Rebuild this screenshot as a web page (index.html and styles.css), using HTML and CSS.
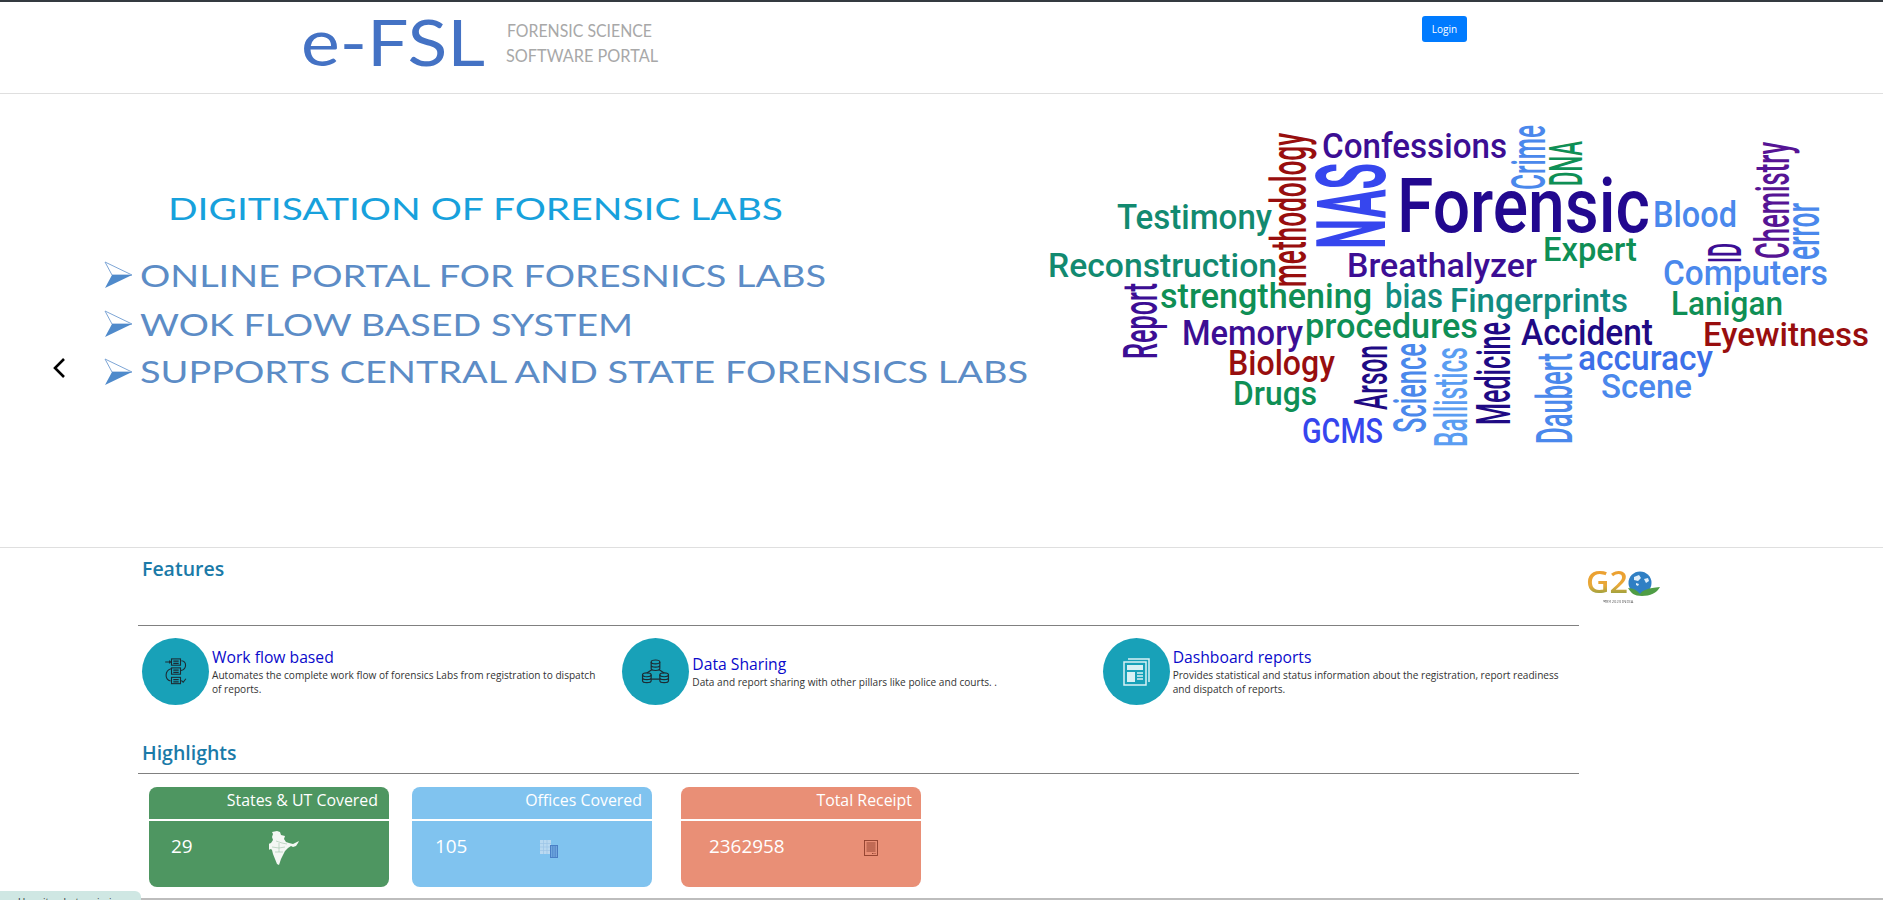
FILE: index.html
```html
<!DOCTYPE html>
<html lang="en">
<head>
<meta charset="utf-8">
<title>e-FSL Forensic Science Software Portal</title>
<link rel="stylesheet" href="styles.css">
</head>
<body>
<header class="site-header">
  <a class="logo" href="#" aria-label="e-FSL">
    <svg class="logo-svg" viewBox="298 2 365 91" width="365" height="91">
      <text class="logo-main" x="301" y="66" font-size="64" textLength="184" lengthAdjust="spacingAndGlyphs">e-FSL</text>
      <text class="logo-sub" x="507" y="37" font-size="17" textLength="145" lengthAdjust="spacingAndGlyphs">FORENSIC SCIENCE</text>
      <text class="logo-sub" x="506" y="62" font-size="17" textLength="152" lengthAdjust="spacingAndGlyphs">SOFTWARE PORTAL</text>
    </svg>
  </a>
  <button class="login" type="button">Login</button>
</header>

<section class="hero">
  <svg class="hero-art" viewBox="0 94 1883 454" width="1883" height="454">
    <text class="slide-title" x="168" y="220" font-size="31" textLength="615" lengthAdjust="spacingAndGlyphs">DIGITISATION OF FORENSIC LABS</text>

    <g class="bullet" transform="translate(105,262)"><path class="bullet-top" d="M0 0L27 13L7 13Z"/><path class="bullet-low" d="M0 26L27 13L7 13Z"/></g>
    <text class="slide-line" x="140" y="287" font-size="31" textLength="686" lengthAdjust="spacingAndGlyphs">ONLINE PORTAL FOR FORESNICS LABS</text>
    <g class="bullet" transform="translate(105,311)"><path class="bullet-top" d="M0 0L27 13L7 13Z"/><path class="bullet-low" d="M0 26L27 13L7 13Z"/></g>
    <text class="slide-line" x="140" y="336" font-size="31" textLength="493" lengthAdjust="spacingAndGlyphs">WOK FLOW BASED SYSTEM</text>
    <g class="bullet" transform="translate(105,359)"><path class="bullet-top" d="M0 0L27 13L7 13Z"/><path class="bullet-low" d="M0 26L27 13L7 13Z"/></g>
    <text class="slide-line" x="140" y="383" font-size="31" textLength="888" lengthAdjust="spacingAndGlyphs">SUPPORTS CENTRAL AND STATE FORENSICS LABS</text>

    <g class="cloud">
      <text class="w-violet" x="1322" y="158" font-size="35" textLength="185" lengthAdjust="spacingAndGlyphs">Confessions</text>
      <text class="w-indigo" x="1397" y="232" font-size="76" textLength="253" lengthAdjust="spacingAndGlyphs">Forensic</text>
      <text class="w-teal" x="1117" y="229" font-size="35" textLength="155" lengthAdjust="spacingAndGlyphs">Testimony</text>
      <text class="w-teal" x="1048" y="277" font-size="34" textLength="229" lengthAdjust="spacingAndGlyphs">Reconstruction</text>
      <text class="w-violet" x="1347" y="277" font-size="34" textLength="190" lengthAdjust="spacingAndGlyphs">Breathalyzer</text>
      <text class="w-green" x="1160" y="308" font-size="35" textLength="212" lengthAdjust="spacingAndGlyphs">strengthening</text>
      <text class="w-teal2" x="1385" y="308" font-size="35" textLength="58" lengthAdjust="spacingAndGlyphs">bias</text>
      <text class="w-teal2" x="1450" y="312" font-size="33" textLength="178" lengthAdjust="spacingAndGlyphs">Fingerprints</text>
      <text class="w-violet" x="1182" y="345" font-size="35" textLength="121" lengthAdjust="spacingAndGlyphs">Memory</text>
      <text class="w-green" x="1305" y="338" font-size="35" textLength="173" lengthAdjust="spacingAndGlyphs">procedures</text>
      <text class="w-red" x="1228" y="375" font-size="35" textLength="107" lengthAdjust="spacingAndGlyphs">Biology</text>
      <text class="w-green" x="1233" y="405" font-size="34" textLength="84" lengthAdjust="spacingAndGlyphs">Drugs</text>
      <text class="w-royal" x="1302" y="443" font-size="35" textLength="81" lengthAdjust="spacingAndGlyphs">GCMS</text>
      <text class="w-navy" x="1521" y="345" font-size="37" textLength="132" lengthAdjust="spacingAndGlyphs">Accident</text>
      <text class="w-blue2" x="1578" y="370" font-size="35" textLength="135" lengthAdjust="spacingAndGlyphs">accuracy</text>
      <text class="w-sky" x="1601" y="398" font-size="33" textLength="91" lengthAdjust="spacingAndGlyphs">Scene</text>
      <text class="w-red" x="1703" y="346" font-size="34" textLength="166" lengthAdjust="spacingAndGlyphs">Eyewitness</text>
      <text class="w-green" x="1671" y="315" font-size="34" textLength="112" lengthAdjust="spacingAndGlyphs">Lanigan</text>
      <text class="w-sky" x="1663" y="285" font-size="35" textLength="165" lengthAdjust="spacingAndGlyphs">Computers</text>
      <text class="w-green" x="1543" y="261" font-size="33" textLength="94" lengthAdjust="spacingAndGlyphs">Expert</text>
      <text class="w-sky" x="1653" y="227" font-size="36" textLength="84" lengthAdjust="spacingAndGlyphs">Blood</text>

      <text class="w-red" transform="translate(1306,287) rotate(-90)" font-size="50" textLength="154" lengthAdjust="spacingAndGlyphs">methodology</text>
      <text class="w-royal w-heavy" transform="translate(1385,249) rotate(-90)" font-size="96" textLength="86" lengthAdjust="spacingAndGlyphs">NAS</text>
      <text class="w-violet" transform="translate(1157,359) rotate(-90)" font-size="48" textLength="76" lengthAdjust="spacingAndGlyphs">Report</text>
      <text class="w-navy" transform="translate(1387,410) rotate(-90)" font-size="47" textLength="65" lengthAdjust="spacingAndGlyphs">Arson</text>
      <text class="w-sky" transform="translate(1426,433) rotate(-90)" font-size="47" textLength="90" lengthAdjust="spacingAndGlyphs">Science</text>
      <text class="w-sky2" transform="translate(1467,447) rotate(-90)" font-size="47" textLength="100" lengthAdjust="spacingAndGlyphs">Ballistics</text>
      <text class="w-navy" transform="translate(1510,425) rotate(-90)" font-size="48" textLength="103" lengthAdjust="spacingAndGlyphs">Medicine</text>
      <text class="w-sky" transform="translate(1572,444) rotate(-90)" font-size="50" textLength="91" lengthAdjust="spacingAndGlyphs">Daubert</text>
      <text class="w-sky" transform="translate(1545,190) rotate(-90)" font-size="49" textLength="65" lengthAdjust="spacingAndGlyphs">Crime</text>
      <text class="w-green" transform="translate(1582,186) rotate(-90)" font-size="47" textLength="45" lengthAdjust="spacingAndGlyphs">DNA</text>
      <text class="w-violet" transform="translate(1741,263) rotate(-90)" font-size="46" textLength="20" lengthAdjust="spacingAndGlyphs">ID</text>
      <text class="w-purple" transform="translate(1789,259) rotate(-90)" font-size="49" textLength="117" lengthAdjust="spacingAndGlyphs">Chemistry</text>
      <text class="w-sky" transform="translate(1819,260) rotate(-90)" font-size="48" textLength="57" lengthAdjust="spacingAndGlyphs">error</text>
    </g>
  </svg>
  <button class="prev" type="button" aria-label="Previous">
    <svg viewBox="0 0 14 22" width="14" height="22"><path class="prev-mark" d="M12 2L3 11L12 20"/></svg>
  </button>
</section>

<div class="content-row">
  <main class="content">
    <h2 class="section-title">Features</h2>
    <div class="section-rule features-rule"></div>
    <div class="features">
      <article class="feature">
        <div class="feature-icon">
          <svg viewBox="0 0 24 30" width="22" height="27">
            <g class="ico-dark">
              <rect x="7" y="1" width="10" height="7"/><rect x="7" y="11" width="10" height="7"/><rect x="7" y="21.500" width="10" height="7"/>
              <path d="M9 3.500h6M9 6h6M9 13.500h6M9 16h6M9 24h6M9 26.500h6"/>
              <path d="M0 4.500h6M4.500 3L6 4.500 4.500 6"/>
              <path d="M18 3c6 .5 6.500 9-.5 11"/>
              <path d="M6.500 12C-.5 14 -1 24 6 25.500"/>
              <path d="M18 25l2 2 3-4"/>
            </g>
          </svg>
        </div>
        <div class="feature-text">
          <h3 class="feature-title">Work flow based</h3>
          <p class="feature-desc">Automates the complete work flow of forensics Labs from registration to dispatch of reports.</p>
        </div>
      </article>
      <article class="feature">
        <div class="feature-icon">
          <svg viewBox="0 0 30 26" width="29" height="25">
            <g class="ico-dark">
              <ellipse cx="15" cy="3" rx="4.500" ry="2"/><path d="M10.500 3v7c0 1.200 2 2 4.500 2s4.500-.8 4.500-2V3M10.500 6.500c0 1.200 2 2 4.500 2s4.500-.8 4.500-2"/>
              <ellipse cx="6" cy="16.500" rx="4.500" ry="2"/><path d="M1.500 16.500v6c0 1.200 2 2 4.500 2s4.500-.8 4.500-2v-6M1.500 19.500c0 1.200 2 2 4.500 2s4.500-.8 4.500-2"/>
              <ellipse cx="24" cy="16.500" rx="4.500" ry="2"/><path d="M19.500 16.500v6c0 1.200 2 2 4.500 2s4.500-.8 4.500-2v-6M19.500 19.500c0 1.200 2 2 4.500 2s4.500-.8 4.500-2"/>
              <path d="M11.500 11L6 14.500M18.500 11L24 14.500M10.500 21h9"/>
            </g>
          </svg>
        </div>
        <div class="feature-text">
          <h3 class="feature-title">Data Sharing</h3>
          <p class="feature-desc">Data and report sharing with other pillars like police and courts. .</p>
        </div>
      </article>
      <article class="feature">
        <div class="feature-icon">
          <svg viewBox="0 0 28 28" width="28" height="28">
            <path class="ico-pale" d="M6 1h21v23M2 4h22v23H2Z"/>
            <rect class="ico-pale-fill" x="5" y="7" width="16" height="5"/>
            <rect class="ico-pale-fill" x="5" y="14" width="8" height="10"/>
            <path class="ico-pale" d="M15 15h6M15 18h6M15 21h6"/>
          </svg>
        </div>
        <div class="feature-text">
          <h3 class="feature-title">Dashboard reports</h3>
          <p class="feature-desc">Provides statistical and status information about the registration, report readiness and dispatch of reports.</p>
        </div>
      </article>
    </div>

    <h2 class="section-title highlights-title">Highlights</h2>
    <div class="section-rule highlights-rule"></div>
    <div class="stats">
      <article class="stat stat-states">
        <div class="stat-head">States &amp; UT Covered</div>
        <div class="stat-body">
          <span class="stat-num">29</span>
          <svg class="stat-ico" viewBox="0 0 31 34" width="31" height="34">
            <path class="map-fill" d="M8 0l3 1 1 3 4 1-1 3 2 3 3 1 4 1 2-1 4-2-1 2-2 3-3 1-2-1-3 2-3 3-2 4-2 4-2 6-2-1-2-5-2-5-1-4-1-1-3 1-1-2 2-2-1-2 3-1 2-3-1-3 1-3-1-2z"/>
            <path class="map-lines" d="M7 10l6 2 5 1M3 16l7 1 6-1M6 21h8M10 12v9"/>
          </svg>
        </div>
      </article>
      <article class="stat stat-offices">
        <div class="stat-head">Offices Covered</div>
        <div class="stat-body">
          <span class="stat-num">105</span>
          <svg class="stat-ico" viewBox="0 0 18 18" width="18" height="18">
            <rect class="bld-back" x="0" y="0" width="11" height="14"/>
            <path class="bld-lines" d="M0 3.500h11M0 7h11M0 10.500h11M3.500 0v14M7 0v14"/>
            <rect class="bld-front" x="10.500" y="5.500" width="7" height="12"/>
            <path class="bld-front-lines" d="M12.800 6v11M15.200 6v11"/>
          </svg>
        </div>
      </article>
      <article class="stat stat-receipt">
        <div class="stat-head">Total Receipt</div>
        <div class="stat-body">
          <span class="stat-num">2362958</span>
          <svg class="stat-ico" viewBox="0 0 14 16" width="14" height="16">
            <rect class="rcpt" x=".5" y=".5" width="13" height="15"/>
            <path class="rcpt" d="M2.500 3h9M2.500 5h9M2.500 7h9M2.500 9h9M2.500 11h9M8 13.500h1.500M10.500 13.500h1"/>
          </svg>
        </div>
      </article>
    </div>
  </main>
  <aside class="g20">
    <svg viewBox="0 0 74 38" width="74" height="38">
      <defs>
        <linearGradient id="g20-grad" x1="0" y1="0" x2="0" y2="1">
          <stop offset="0" stop-color="#ef9a2a"/><stop offset=".6" stop-color="#e8a838"/><stop offset="1" stop-color="#4f9d45"/>
        </linearGradient>
      </defs>
      <text class="g20-text" x="0" y="22" font-size="30" textLength="42" lengthAdjust="spacingAndGlyphs">G2</text>
      <circle class="g20-globe" cx="54" cy="12" r="11.500"/>
      <path class="g20-land" d="M48 6l5-2 2 3-3 3-4-1zM58 8l4-1 1 3-3 2zM50 12l3 1-1 2-2-1z"/>
      <path class="g20-lotus" d="M42 17c5 0 9 2 12 6c3-4 8-6 20-7c-3 6-10 9-18 9s-11-3-14-8z"/>
      <text class="g20-small" x="17" y="32" font-size="4">भारत 2023 INDIA</text>
    </svg>
  </aside>
</div>

<div class="page-edge"></div>
<div class="notice">Use site photo mission</div>
</body>
</html>
```

FILE: styles.css
```css
* { box-sizing: border-box; }

html, body {
  margin: 0;
  height: 900px;
  overflow: hidden;
  background: #fff;
  font-family: "Open Sans", "Noto Sans", sans-serif;
  color: #333;
}

body {
  position: relative;
  border-top: 2px solid #343a40;
}

/* Header */
.site-header {
  display: flex;
  align-items: flex-start;
  height: 92px;
  border-bottom: 1px solid #dfdfdf;
}

.logo {
  display: block;
  margin-left: 298px;
}

.logo-svg { display: block; }

.logo-main {
  font-family: Lato, "Open Sans", sans-serif;
  fill: #4472c4;
}

.logo-sub {
  font-family: Lato, "Open Sans", sans-serif;
  fill: #a8a8a8;
}

.login {
  width: 45px;
  height: 26px;
  margin: 14px 0 0 759px;
  padding: 0;
  border: 0;
  border-radius: 3px;
  background: #007bff;
  color: #fff;
  font: 10px "Open Sans", sans-serif;
}

/* Hero */
.hero {
  position: relative;
  height: 454px;
  border-bottom: 1px solid #dfdfdf;
}

.hero-art { display: block; }

.slide-title {
  font-family: Lato, "Open Sans", sans-serif;
  fill: #17a1dc;
}

.slide-line {
  font-family: Lato, "Open Sans", sans-serif;
  fill: #5c8cc6;
}

.bullet-top {
  fill: #fff;
  stroke: #7ea6d6;
  stroke-width: 1;
}

.bullet-low { fill: #4f8acb; }

.cloud text {
  font-family: Roboto, "Liberation Sans", sans-serif;
  font-weight: 500;
}

.cloud .w-heavy { font-weight: 700; }

.w-indigo { fill: #22088f; }
.w-violet { fill: #3c0e94; }
.w-purple { fill: #561494; }
.w-navy { fill: #1f0a84; }
.w-royal { fill: #3646ee; }
.w-blue2 { fill: #3c6fe8; }
.w-sky { fill: #4a88ec; }
.w-sky2 { fill: #5a9df2; }
.w-teal { fill: #128a70; }
.w-teal2 { fill: #128c80; }
.w-green { fill: #0f8f55; }
.w-red { fill: #980e0e; }

.prev {
  position: absolute;
  left: 52px;
  top: 262px;
  width: 16px;
  height: 24px;
  padding: 0;
  border: 0;
  background: none;
}

.prev svg { display: block; }

.prev-mark {
  fill: none;
  stroke: #000;
  stroke-width: 2.600;
}

/* Content */
.content-row {
  display: flex;
  padding-left: 138px;
}

.content { width: 1441px; }

.section-title {
  margin: 0;
  padding: 8px 0 0 4px;
  font-size: 19.500px;
  line-height: 26px;
  font-weight: 600;
  color: #1a7aa8;
}

.highlights-title {
  padding-top: 0;
  margin-top: 35px;
}

.section-rule { border-top: 1px solid #808080; }
.features-rule { margin-top: 43px; }
.highlights-rule { margin-top: 7px; }

.features {
  display: grid;
  grid-template-columns: repeat(3, 1fr);
  margin-top: 12px;
}

.feature {
  display: flex;
  align-items: center;
  padding: 0 18px 0 4px;
}

.feature-icon {
  display: flex;
  flex: none;
  align-items: center;
  justify-content: center;
  width: 67px;
  height: 67px;
  margin-right: 3px;
  border-radius: 50%;
  background: #18a1b8;
}

.feature-text { min-width: 0; }

.feature-title {
  margin: 0;
  font-size: 15.700px;
  line-height: 21px;
  font-weight: 400;
  color: #0a0acb;
}

.feature-desc {
  margin: 0;
  font-size: 10.100px;
  line-height: 14.500px;
  color: #333;
}

.ico-dark {
  fill: none;
  stroke: #1d2b33;
  stroke-width: 1.200;
}

.ico-pale {
  fill: none;
  stroke: #d8f1f5;
  stroke-width: 1.500;
}

.ico-pale-fill { fill: #d8f1f5; }

/* Stats */
.stats {
  display: flex;
  gap: 23px;
  margin: 13px 0 0 11px;
}

.stat {
  width: 240px;
  height: 100px;
  overflow: hidden;
  border-radius: 8px;
  color: #fff;
}

.stat-states { background: #4e9661; }
.stat-offices { background: #80c3ef; }
.stat-receipt { background: #e98f76; margin-left: 6px; }

.stat-head {
  height: 34px;
  padding: 0 11px 0 0;
  border-bottom: 2px solid #fff;
  font-size: 15.900px;
  line-height: 26px;
  text-align: right;
}

.stat-offices .stat-head { padding-right: 10px; }
.stat-receipt .stat-head { padding-right: 9px; }

.stat-body {
  display: flex;
  align-items: flex-start;
}

.stat-num {
  flex: none;
  font-size: 18.900px;
  line-height: 25px;
}

.stat-ico { flex: none; }

.stat-states .stat-num { width: 98px; margin: 13px 0 0 22px; }
.stat-states .stat-ico { margin-top: 10px; }
.stat-offices .stat-num { width: 105px; margin: 13px 0 0 23px; }
.stat-offices .stat-ico { margin-top: 19px; }
.stat-receipt .stat-num { width: 155px; margin: 13px 0 0 28px; }
.stat-receipt .stat-ico { margin-top: 19px; }

.map-fill { fill: #f4f7f4; }

.map-lines {
  fill: none;
  stroke: #9fc2a8;
  stroke-width: .6;
}

.bld-back { fill: #b9d9f1; }

.bld-lines {
  fill: none;
  stroke: #9cc4e6;
  stroke-width: .7;
}

.bld-front {
  fill: #6fa7de;
  stroke: #4a7fc6;
  stroke-width: 1;
}

.bld-front-lines {
  fill: none;
  stroke: #4a7fc6;
  stroke-width: .8;
}

.rcpt {
  fill: none;
  stroke: #8f3f2d;
  stroke-width: .9;
}

/* G20 */
.g20 {
  margin: 23px 0 0 7px;
  filter: blur(.35px);
}

.g20 svg { display: block; }

.g20-text {
  font-family: "Open Sans", sans-serif;
  font-weight: 600;
  fill: url(#g20-grad);
}

.g20-globe { fill: #2f7fc4; }
.g20-land { fill: #dfeefa; }
.g20-lotus { fill: #4f9d45; }

.g20-small {
  font-family: "Noto Sans", "Open Sans", sans-serif;
  fill: #666;
}

/* Bottom edge */
.page-edge {
  position: absolute;
  left: 0;
  right: 0;
  top: 896px;
  height: 2px;
  background: #bdbdbd;
}

.notice {
  position: absolute;
  left: 0;
  top: 889px;
  width: 141px;
  height: 9px;
  overflow: hidden;
  padding: 5px 0 0 18px;
  border-radius: 0 6px 0 0;
  background: #cfe7e3;
  font-size: 10px;
  line-height: 12px;
  color: #333;
}
```
